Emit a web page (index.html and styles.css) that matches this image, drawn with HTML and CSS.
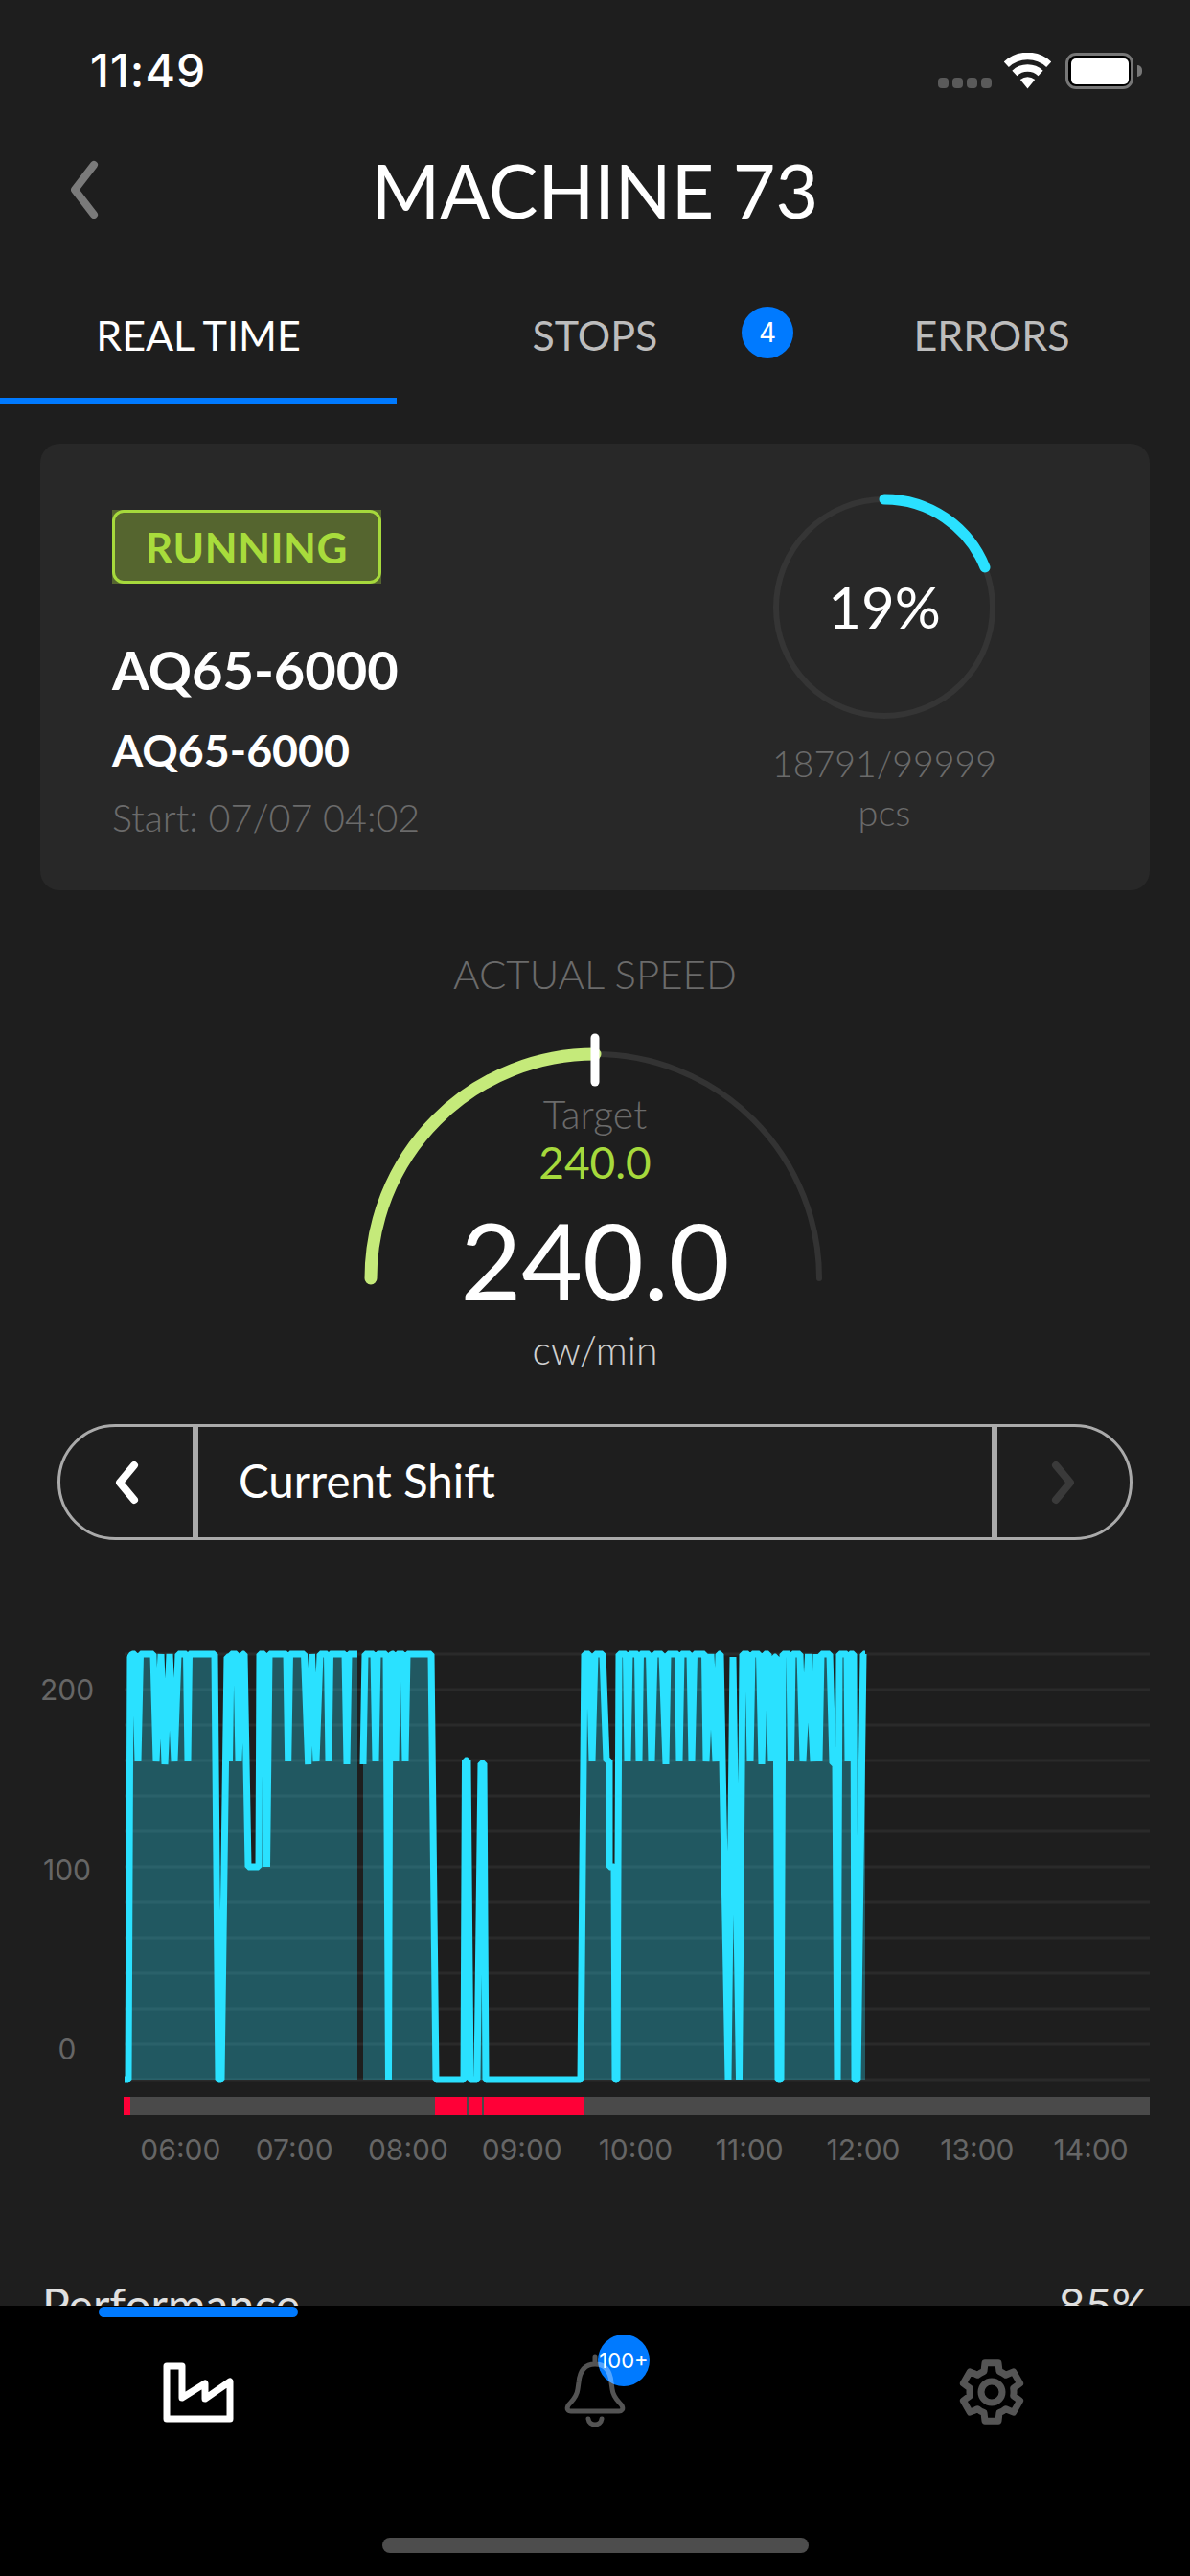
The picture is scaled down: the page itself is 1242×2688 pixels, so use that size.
FILE: index.html
```html
<!DOCTYPE html>
<html lang="en">
<head>
<meta charset="utf-8">
<title>Machine 73</title>
<link rel="stylesheet" href="styles.css">
</head>
<body>
<div class="phone">
  <div class="content">
    <div class="status">
      <span class="time">11:49</span>
      <div class="status-icons">
        <div class="signal"><i></i><i></i><i></i><i></i></div>
        <svg class="wifi" width="49" height="38" viewBox="0 0 49 38">
          <path class="wifi-arc" d="M2.3 12.2A32.5 32.5 0 0 1 46.7 12.2"/>
          <path class="wifi-arc" d="M10.9 21.4A20 20 0 0 1 38.1 21.4"/>
          <path class="wifi-dot" d="M24.5 37.5L16.8 28Q24.5 22.5 32.2 28Z"/>
        </svg>
        <div class="battery"><div class="battery-level"></div></div>
        <div class="battery-nub"></div>
      </div>
    </div>

    <header class="header">
      <svg class="back" width="40" height="64" viewBox="0 0 40 64"><path d="M30 6L10 32L30 58"/></svg>
      <h1 class="title">MACHINE 73</h1>
    </header>

    <nav class="tabs">
      <div class="tab tab-active">REAL TIME</div>
      <div class="tab">STOPS<span class="tab-badge">4</span></div>
      <div class="tab">ERRORS</div>
    </nav>

    <section class="card">
      <div class="job">
        <div class="state"><span class="state-label">RUNNING</span></div>
        <div class="job-code">AQ65-6000</div>
        <div class="job-sub">AQ65-6000</div>
        <div class="job-start">Start: 07/07 04:02</div>
      </div>
      <div class="progress">
        <div class="ring">
          <svg width="240" height="240" viewBox="0 0 240 240">
            <circle class="ring-track" cx="120" cy="120" r="113"/>
            <path class="ring-value" d="M120 7A113 113 0 0 1 225 78"/>
          </svg>
          <div class="ring-text">19%</div>
        </div>
        <div class="progress-count">18791/99999</div>
        <div class="progress-unit">pcs</div>
      </div>
    </section>

    <section class="speed">
      <div class="speed-title">ACTUAL SPEED</div>
      <div class="gauge">
        <svg class="gauge-svg" width="520" height="280" viewBox="0 0 520 280">
          <path class="gauge-track" d="M26 264A234 234 0 0 1 494 264"/>
          <path class="gauge-value" d="M26 264A234 234 0 0 1 260 30"/>
          <path class="gauge-tick" d="M260 13V59"/>
        </svg>
        <div class="gauge-target-label">Target</div>
        <div class="gauge-target">240.0</div>
        <div class="gauge-value-text">240.0</div>
        <div class="gauge-unit">cw/min</div>
      </div>
    </section>

    <div class="selector">
      <div class="selector-btn">
        <svg width="30" height="48" viewBox="0 0 30 48"><path class="chev-on" d="M23 6L8 24L23 42"/></svg>
      </div>
      <div class="selector-label">Current Shift</div>
      <div class="selector-btn">
        <svg width="30" height="48" viewBox="0 0 30 48"><path class="chev-off" d="M7 6L22 24L7 42"/></svg>
      </div>
    </div>

    <section class="chart">
      <svg class="chart-svg" width="1242" height="515" viewBox="0 1700 1242 515">
        <path class="grid" d="M130 1726H1200M130 1763H1200M130 1800H1200M130 1837H1200M130 1874H1200M130 1911H1200M130 1948H1200M130 1985H1200M130 2022H1200M130 2059H1200M130 2096H1200M130 2133H1200M130 2170H1200"/>
        <text class="axis" x="70" y="1774">200</text>
        <text class="axis" x="70" y="1962">100</text>
        <text class="axis" x="70" y="2149">0</text>

        <path class="area" d="M130 2170L134 2170L136 1729L138 1726L141 1726L144 1838L146.500 1726L160 1726L163 1838L168 1726L172 1841L177 1726L182 1838L186 1726L194.500 1726L196 1838L197.500 1726L224 1726L228 2170L231 2170L237 1729L238 1729L239.500 1838L241 1726L247 1726L249 1838L253 1726L255 1726L257 1837L259 1948L270 1948L271 1726L276 1726L278.500 1948L281 1726L299 1726L300.700 1838L302.500 1726L317.500 1726L321.700 1841L325.500 1726L330 1838L334 1726L341.500 1726L343 1838L344.500 1726L360 1726L362 1841L364 1726L373 1726L373 2170Z"/>
        <path class="area" d="M379 2170L379 1841L381 1726L390 1726L392 1838L394 1726L403 1726L405.500 2170L407 1729L409 1726L411 1726L413 1838L414.500 1726L421 1726L423 1838L425 1726L450 1726L455 2170L484 2170L485.500 1837L488 1837L491 2170L498 2170L502 1840L505 1840L507 2170L606 2170L610 1726L615 1726L618 1838L621 1726L629 1726L633 1837L636 1837L636 1948L641 1948L642 2170L644 2170L646 1726L653.500 1726L655 1838L657 1726L665.500 1726L667 1838L668.500 1726L677.500 1726L680 1838L683 1726L691 1726L695 1841L697 1726L707.500 1726L709 1838L711 1726L720 1726L722 1838L724.500 1726L735.500 1726L737 1838L742 1726L747 1838L750 1726L752 1726L760 2170L765 1729L771.500 2170L775 1726L781 1726L783 1838L785 1726L792.500 1726L795 1841L798 1726L802 1726L805 1838L808 1729L810 1729L812 2170L815 2170L817 1726L824 1726L825.500 1838L827 1726L835 1726L838 1838L843.500 1726L849 1838L852 1726L855 1838L857 1726L866 1726L869 1840L872 1840L874 2170L876 1726L884 1726L885 1838L887 1726L891 1726L892 2170L895 2170L901 1726L903 1726L903 2170Z"/>
        <path class="line" d="M130 2170L134 2170L136 1729L138 1726L141 1726L144 1838L146.500 1726L160 1726L163 1838L168 1726L172 1841L177 1726L182 1838L186 1726L194.500 1726L196 1838L197.500 1726L224 1726L228 2170L231 2170L237 1729L238 1729L239.500 1838L241 1726L247 1726L249 1838L253 1726L255 1726L257 1837L259 1948L270 1948L271 1726L276 1726L278.500 1948L281 1726L299 1726L300.700 1838L302.500 1726L317.500 1726L321.700 1841L325.500 1726L330 1838L334 1726L341.500 1726L343 1838L344.500 1726L360 1726L362 1841L364 1726L373 1726"/>
        <path class="line" d="M379 1841L381 1726L390 1726L392 1838L394 1726L403 1726L405.500 2170L407 1729L409 1726L411 1726L413 1838L414.500 1726L421 1726L423 1838L425 1726L450 1726L455 2170L484 2170L485.500 1837L488 1837L491 2170L498 2170L502 1840L505 1840L507 2170L606 2170L610 1726L615 1726L618 1838L621 1726L629 1726L633 1837L636 1837L636 1948L641 1948L642 2170L644 2170L646 1726L653.500 1726L655 1838L657 1726L665.500 1726L667 1838L668.500 1726L677.500 1726L680 1838L683 1726L691 1726L695 1841L697 1726L707.500 1726L709 1838L711 1726L720 1726L722 1838L724.500 1726L735.500 1726L737 1838L742 1726L747 1838L750 1726L752 1726L760 2170L765 1729L771.500 2170L775 1726L781 1726L783 1838L785 1726L792.500 1726L795 1841L798 1726L802 1726L805 1838L808 1729L810 1729L812 2170L815 2170L817 1726L824 1726L825.500 1838L827 1726L835 1726L838 1838L843.500 1726L849 1838L852 1726L855 1838L857 1726L866 1726L869 1840L872 1840L874 2170L876 1726L884 1726L885 1838L887 1726L891 1726L892 2170L895 2170L901 1726L903 1726"/>

        <rect class="bar" x="129" y="2188" width="1071" height="19"/>
        <rect class="bar-stop" x="129" y="2188" width="7" height="19"/>
        <rect class="bar-stop" x="454" y="2188" width="33" height="19"/>
        <rect class="bar-stop" x="490" y="2188" width="13" height="19"/>
        <rect class="bar-stop" x="505" y="2188" width="104" height="19"/>
      </svg>
      <div class="hours">
        <span>06:00</span><span>07:00</span><span>08:00</span><span>09:00</span><span>10:00</span><span>11:00</span><span>12:00</span><span>13:00</span><span>14:00</span>
      </div>
    </section>

    <div class="metric">
      <span>Performance</span>
      <span>85%</span>
    </div>
  </div>

  <footer class="nav">
    <div class="nav-items">
      <div class="nav-item">
        <div class="nav-pill"></div>
        <svg width="80" height="71" viewBox="0 0 80 71"><path class="nav-factory" d="M7 8H23V41L47 26V42L73 24V63H7Z"/></svg>
      </div>
      <div class="nav-item">
        <div class="nav-badge">100+</div>
        <svg class="nav-bell-svg" width="70" height="80" viewBox="0 0 70 80">
          <path class="nav-bell" d="M35 3V11M35 11C24 11 19 19 18 30L17 37C16 46 10 50 7 54C5 58 7 60 10 60H60C63 60 65 58 63 54C60 50 54 46 53 37L52 30C51 19 46 11 35 11ZM28 68C29 76 41 76 42 68"/>
        </svg>
      </div>
      <div class="nav-item">
        <svg width="80" height="80" viewBox="-40 -40 80 80">
          <path class="nav-gear" d="M-8 -21.600L-7 -30.200L7 -30.200L8 -21.600A23 23 0 0 1 14.700 -17.700L22.650 -21.160L29.650 -9.040L22.700 -3.870A23 23 0 0 1 22.700 3.870L29.650 9.040L22.650 21.160L14.700 17.730A23 23 0 0 1 8 21.600L7 30.200L-7 30.200L-8 21.600A23 23 0 0 1 -14.700 17.700L-22.650 21.160L-29.650 9.040L-22.700 3.870A23 23 0 0 1 -22.700 -3.870L-29.650 -9.040L-22.650 -21.160L-14.700 -17.730A23 23 0 0 1 -8 -21.600Z"/>
          <circle class="nav-gear" r="11"/>
        </svg>
      </div>
    </div>
    <div class="home-bar"></div>
  </footer>
</div>
</body>
</html>
```
FILE: styles.css
```css
* { box-sizing: border-box; }
html, body { margin: 0; padding: 0; background: #1e1e1e; }
body { font-family: "Lato", "Open Sans", sans-serif; color: #fff; }

.phone { width: 1242px; height: 2688px; display: flex; flex-direction: column; overflow: hidden; background: #1e1e1e; }
.content { flex: 1; min-height: 0; overflow: hidden; }

/* status bar */
.status { height: 148px; padding: 50px 50px 0 94px; display: flex; justify-content: space-between; align-items: flex-start; }
.time { font-family: "Inter", sans-serif; font-weight: 500; font-size: 48px; line-height: 48px; letter-spacing: 1px; }
.status-icons { display: flex; align-items: flex-start; padding-top: 5px; }
.signal { display: flex; gap: 4px; margin-top: 26px; margin-right: 13px; }
.signal i { display: block; width: 11px; height: 11px; border-radius: 4px; background: #5a5a5a; }
.wifi { margin-right: 15px; }
.wifi-arc { fill: none; stroke: #fff; stroke-width: 7.5px; }
.wifi-dot { fill: #fff; }
.battery { width: 71px; height: 38px; border: 3.500px solid #777; border-radius: 11px; padding: 2.500px; background: #000; }
.battery-level { height: 100%; background: #fff; border-radius: 5px; }
.battery-nub { width: 5px; height: 12px; margin: 13px 0 0 4px; background: #777; border-radius: 0 6px 6px 0; }

/* header */
.header { height: 100px; display: flex; justify-content: center; align-items: center; position: relative; }
.title { margin: 0; font-size: 77px; font-weight: 400; line-height: 100px; letter-spacing: 0; }
.back { position: absolute; left: 68px; top: 18px; }
.back path { fill: none; stroke: #7a7a7a; stroke-width: 8px; stroke-linecap: round; stroke-linejoin: round; }

/* tabs */
.tabs { margin-top: 29px; display: grid; grid-template-columns: repeat(3, 414px); height: 145px; }
.tab { position: relative; display: flex; justify-content: center; align-items: center; font-size: 43px; color: #bdbdbd; }
.tab-active { color: #fff; border-bottom: 7px solid #007aff; padding-top: 7px; }
.tab-badge { position: absolute; left: 360px; top: 43px; width: 54px; height: 54px; border-radius: 50%; background: #007aff; color: #fff; font-family: "Inter", sans-serif; font-size: 28px; line-height: 54px; text-align: center; }

/* card */
.card { margin: 41px 42px 0; height: 466px; background: #282828; border-radius: 20px; display: grid; grid-template-columns: 656px 300px; padding-left: 75px; }
.job { padding-top: 69px; }
.state { width: 281px; height: 77px; background: #55652f; }
.state-label { display: flex; height: 100%; align-items: center; justify-content: center; border: 3px solid #a6d93c; border-radius: 12px; color: #a8dc3c; font-size: 44px; font-weight: 700; letter-spacing: 0.5px; }
.job-code { margin-top: 60px; font-size: 56px; line-height: 60px; font-weight: 700; }
.job-sub { margin-top: 28px; font-size: 46.500px; line-height: 50px; font-weight: 700; }
.job-start { margin-top: 23px; font-size: 39.500px; line-height: 46px; font-weight: 300; color: #6b6b6b; }

.progress { padding-top: 51px; text-align: center; }
.ring { position: relative; width: 240px; height: 240px; margin: 0 auto; }
.ring-track { fill: none; stroke: #353535; stroke-width: 6px; }
.ring-value { fill: none; stroke: #2ae1ff; stroke-width: 11px; stroke-linecap: round; }
.ring-text { position: absolute; inset: 0; display: flex; align-items: center; justify-content: center; padding-bottom: 3px; font-size: 60px; }
.progress-count { margin-top: 17px; font-size: 37.500px; line-height: 51px; font-weight: 300; color: #6b6b6b; }
.progress-unit { font-size: 38px; line-height: 51px; font-weight: 300; color: #6b6b6b; }

/* speed gauge */
.speed { text-align: center; }
.speed-title { margin-top: 67px; font-size: 42px; line-height: 40px; font-weight: 300; color: #6b6b6b; }
.gauge { position: relative; margin-top: 34px; padding-top: 70px; }
.gauge-svg { position: absolute; left: 361px; top: 0; }
.gauge-track { fill: none; stroke: #333; stroke-width: 6px; stroke-linecap: round; }
.gauge-value { fill: none; stroke: #c5ea7a; stroke-width: 13px; stroke-linecap: round; }
.gauge-tick { fill: none; stroke: #fff; stroke-width: 9px; stroke-linecap: round; }
.gauge-target-label { font-size: 41px; line-height: 46px; font-weight: 300; color: #6b6b6b; }
.gauge-target { margin-top: 2px; font-size: 46px; line-height: 50px; color: #a6d93c; }
.gauge-value-text { margin-top: 21px; font-size: 110px; line-height: 110px; }
.gauge-unit { margin-top: 15px; font-size: 41px; line-height: 50px; font-weight: 300; color: #d0d0d0; }

/* selector */
.selector { margin: 52px 60px 0; height: 121px; border: 3px solid #aaa; border-radius: 61px; display: grid; grid-template-columns: 138px 1fr 138px; }
.selector-btn { display: flex; align-items: center; justify-content: center; }
.selector-label { border-left: 6px solid #aaa; border-right: 6px solid #aaa; padding-left: 42px; font-size: 47.500px; line-height: 112px; }
.chev-on, .chev-off { fill: none; stroke-width: 8px; stroke-linecap: round; stroke-linejoin: round; }
.chev-on { stroke: #fff; }
.chev-off { stroke: #3a3a3a; }

/* chart */
.chart { margin-top: 93px; }
.chart-svg { display: block; }
.grid { stroke: #2a2a2a; stroke-width: 3px; fill: none; }
.axis { font-family: "Inter", sans-serif; font-size: 30px; fill: #666; text-anchor: middle; }
.area { fill: #2ae1ff; fill-opacity: 0.3; stroke: none; }
.line { fill: none; stroke: #2ae1ff; stroke-width: 7px; stroke-linejoin: bevel; stroke-linecap: butt; }
.bar { fill: #4a4a4a; }
.bar-stop { fill: #ff0037; }
.hours { margin: 8px 0 0 129px; width: 1069px; display: grid; grid-template-columns: repeat(9, 1fr); text-align: center; font-family: "Inter", sans-serif; font-size: 30px; line-height: 40px; color: #666; }

.metric { margin: 114px 43px 0 44px; display: flex; justify-content: space-between; font-size: 48px; line-height: 56px; color: #e0e0e0; }

/* bottom nav */
.nav { flex: none; height: 282px; background: #000; }
.nav-items { display: grid; grid-template-columns: repeat(3, 414px); height: 180px; }
.nav-item { position: relative; display: flex; align-items: center; justify-content: center; }
.nav-pill { position: absolute; left: 103px; top: 1px; width: 208px; height: 11px; border-radius: 6px; background: #007aff; }
.nav-factory { fill: none; stroke: #fff; stroke-width: 7px; stroke-linejoin: round; }
.nav-bell-svg { position: relative; }
.nav-bell { fill: none; stroke: #fff; stroke-opacity: 0.33; stroke-width: 5px; stroke-linecap: round; stroke-linejoin: round; }
.nav-badge { position: absolute; left: 210px; top: 30px; width: 54px; height: 54px; border-radius: 50%; background: #007aff; color: #fff; font-family: "Inter", sans-serif; font-size: 22px; line-height: 54px; text-align: center; }
.nav-gear { fill: none; stroke: #555; stroke-width: 7px; stroke-linejoin: round; }
.home-bar { width: 445px; height: 16px; margin: 62px auto 0; border-radius: 8px; background: #4d4d4d; }
```
